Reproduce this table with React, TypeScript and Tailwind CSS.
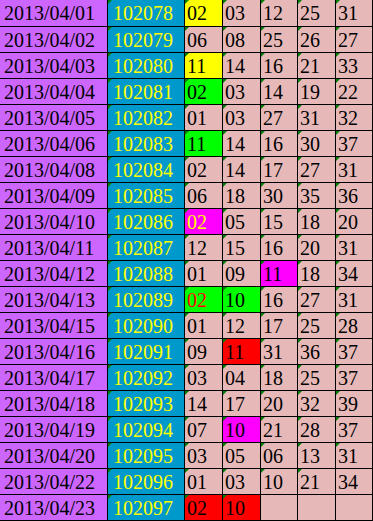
import React from "react";

type Cell = { v: string; bg?: string; color?: string; mark?: boolean };

const PINK = "bg-[#e6b9b8]";

const rows: { date: string; no: string; cells: Cell[] }[] = [
  { date: "2013/04/01", no: "102078", cells: [{ v: "02", bg: "bg-[#ffff00]" }, { v: "03" }, { v: "12" }, { v: "25" }, { v: "31" }] },
  { date: "2013/04/02", no: "102079", cells: [{ v: "06" }, { v: "08" }, { v: "25" }, { v: "26" }, { v: "27" }] },
  { date: "2013/04/03", no: "102080", cells: [{ v: "11", bg: "bg-[#ffff00]" }, { v: "14" }, { v: "16" }, { v: "21" }, { v: "33" }] },
  { date: "2013/04/04", no: "102081", cells: [{ v: "02", bg: "bg-[#00ff00]" }, { v: "03" }, { v: "14" }, { v: "19" }, { v: "22" }] },
  { date: "2013/04/05", no: "102082", cells: [{ v: "01" }, { v: "03" }, { v: "27" }, { v: "31" }, { v: "32" }] },
  { date: "2013/04/06", no: "102083", cells: [{ v: "11", bg: "bg-[#00ff00]" }, { v: "14" }, { v: "16" }, { v: "30" }, { v: "37" }] },
  { date: "2013/04/08", no: "102084", cells: [{ v: "02" }, { v: "14" }, { v: "17" }, { v: "27" }, { v: "31" }] },
  { date: "2013/04/09", no: "102085", cells: [{ v: "06" }, { v: "18" }, { v: "30" }, { v: "35" }, { v: "36" }] },
  { date: "2013/04/10", no: "102086", cells: [{ v: "02", bg: "bg-[#ff00ff]", color: "text-[#ffff00]" }, { v: "05" }, { v: "15" }, { v: "18" }, { v: "20" }] },
  { date: "2013/04/11", no: "102087", cells: [{ v: "12" }, { v: "15" }, { v: "16" }, { v: "20" }, { v: "31" }] },
  { date: "2013/04/12", no: "102088", cells: [{ v: "01" }, { v: "09" }, { v: "11", bg: "bg-[#ff00ff]" }, { v: "18" }, { v: "34" }] },
  { date: "2013/04/13", no: "102089", cells: [{ v: "02", bg: "bg-[#00ff00]", color: "text-[#ff0000]" }, { v: "10", bg: "bg-[#00ff00]" }, { v: "16" }, { v: "27" }, { v: "31" }] },
  { date: "2013/04/15", no: "102090", cells: [{ v: "01" }, { v: "12" }, { v: "17" }, { v: "25" }, { v: "28" }] },
  { date: "2013/04/16", no: "102091", cells: [{ v: "09" }, { v: "11", bg: "bg-[#ff0000]" }, { v: "31" }, { v: "36" }, { v: "37" }] },
  { date: "2013/04/17", no: "102092", cells: [{ v: "03" }, { v: "04" }, { v: "18" }, { v: "25" }, { v: "37" }] },
  { date: "2013/04/18", no: "102093", cells: [{ v: "14" }, { v: "17" }, { v: "20" }, { v: "32" }, { v: "39" }] },
  { date: "2013/04/19", no: "102094", cells: [{ v: "07" }, { v: "10", bg: "bg-[#ff00ff]" }, { v: "21" }, { v: "28" }, { v: "37" }] },
  { date: "2013/04/20", no: "102095", cells: [{ v: "03" }, { v: "05" }, { v: "06" }, { v: "13" }, { v: "31" }] },
  { date: "2013/04/22", no: "102096", cells: [{ v: "01" }, { v: "03" }, { v: "10" }, { v: "21" }, { v: "34", mark: false }] },
  { date: "2013/04/23", no: "102097", cells: [{ v: "02", bg: "bg-[#ff0000]" }, { v: "10", bg: "bg-[#ff0000]" }, { v: "" }, { v: "" }, { v: "" }] },
];

// small green "number stored as text" corner
function Mark() {
  return (
    <span className="absolute left-0 top-0 h-0 w-0 border-t-[4px] border-r-[4px] border-t-[#008000] border-r-transparent" />
  );
}

export default function App() {
  return (
    <div
      className="w-[373px] bg-white text-[20px] text-black"
      style={{ fontFamily: '"Liberation Serif", "Times New Roman", serif' }}
    >
      {rows.map((r, i) => (
        <div
          key={r.date}
          className={`grid grid-cols-[108px_77px_38px_38px_37px_38px_37px] border-b border-black ${i === 0 ? "h-[27px]" : "h-[26px]"}`}
        >
          <div className="border-r border-black bg-[#cc66ff] pl-[4px] pt-[2px] leading-[23px]">{r.date}</div>
          <div className="relative border-r border-black bg-[#0099cc] pl-[5px] pt-[2px] leading-[23px] text-[#ffff00]">
            <Mark />
            {r.no}
          </div>
          {r.cells.map((c, j) => (
            <div
              key={j}
              className={`relative border-r border-black pl-[2px] pt-[2px] leading-[23px] ${c.bg ?? PINK} ${c.color ?? ""}`}
            >
              {c.v && c.mark !== false ? <Mark /> : null}
              {c.v}
            </div>
          ))}
        </div>
      ))}
    </div>
  );
}
